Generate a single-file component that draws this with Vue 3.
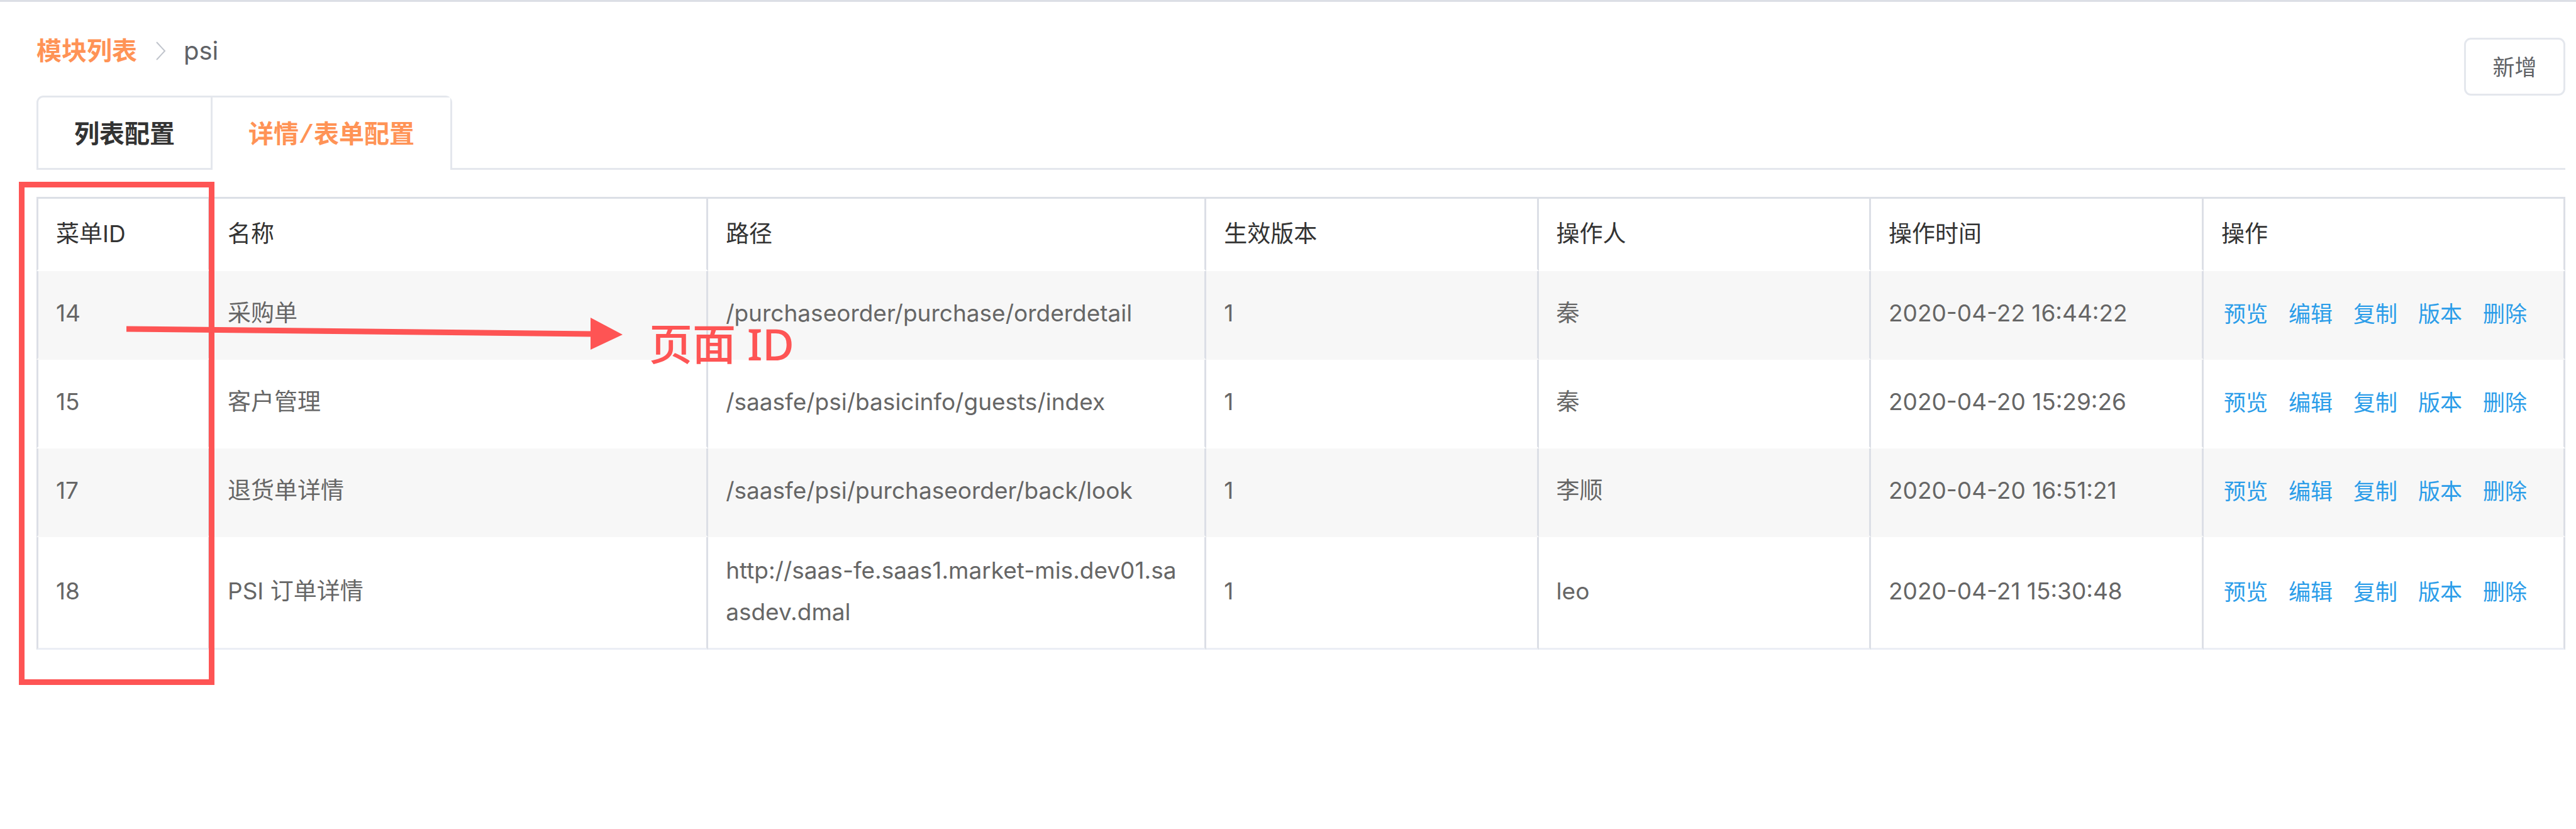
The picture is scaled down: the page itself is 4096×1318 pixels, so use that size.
<script setup>
const tabs = [
  { label: '列表配置', active: false },
  { label: '详情/表单配置', active: true },
]

const columns = ['菜单ID', '名称', '路径', '生效版本', '操作人', '操作时间', '操作']
const actions = ['预览', '编辑', '复制', '版本', '删除']

const rows = [
  { id: 14, name: '采购单', path: '/purchaseorder/purchase/orderdetail', version: 1, operator: '秦', time: '2020-04-22 16:44:22' },
  { id: 15, name: '客户管理', path: '/saasfe/psi/basicinfo/guests/index', version: 1, operator: '秦', time: '2020-04-20 15:29:26' },
  { id: 17, name: '退货单详情', path: '/saasfe/psi/purchaseorder/back/look', version: 1, operator: '李顺', time: '2020-04-20 16:51:21' },
  { id: 18, name: 'PSI 订单详情', path: 'http://saas-fe.saas1.market-mis.dev01.saasdev.dmal', version: 1, operator: 'leo', time: '2020-04-21 15:30:48' },
]
</script>

<template>
  <main class="page">
    <header class="head">
      <nav class="crumbs">
        <a href="#" class="crumb-link">模块列表</a>
        <svg class="chevron" viewBox="0 0 16 30" aria-hidden="true">
          <path d="M1 1 L14 15 L1 29" fill="none" stroke="#c0c4cc" stroke-width="2" />
        </svg>
        <span>psi</span>
      </nav>
      <button type="button" class="add">新增</button>
    </header>

    <div class="tabbar">
      <div class="tabs" role="tablist">
        <button
          v-for="tab in tabs"
          :key="tab.label"
          type="button"
          role="tab"
          class="tab"
          :class="{ active: tab.active }"
          :aria-selected="tab.active"
        >{{ tab.label }}</button>
      </div>
    </div>

    <section class="table-wrap">
      <table class="grid">
        <colgroup>
          <col class="c-id" />
          <col class="c-wide" />
          <col class="c-wide" />
          <col class="c-mid" />
          <col class="c-mid" />
          <col />
          <col class="c-ops" />
        </colgroup>
        <thead>
          <tr>
            <th v-for="c in columns" :key="c" scope="col">{{ c }}</th>
          </tr>
        </thead>
        <tbody>
          <tr v-for="row in rows" :key="row.id">
            <td>{{ row.id }}</td>
            <td>{{ row.name }}</td>
            <td>{{ row.path }}</td>
            <td>{{ row.version }}</td>
            <td>{{ row.operator }}</td>
            <td>{{ row.time }}</td>
            <td>
              <div class="ops">
                <a v-for="a in actions" :key="a" href="#">{{ a }}</a>
              </div>
            </td>
          </tr>
        </tbody>
      </table>

      <div class="mark-box"></div>
      <div class="mark-note">
        <svg class="arrow" viewBox="0 0 789 52" aria-hidden="true">
          <path d="M0 18 L740 26" stroke="#fe5454" stroke-width="9" />
          <path d="M738 0 L789 27 L738 51 Z" fill="#fe5454" />
        </svg>
        <span>页面 ID</span>
      </div>
    </section>
  </main>
</template>

<style>
body {
  margin: 0;
  background: #fff;
}
</style>

<style scoped>
.page {
  box-sizing: border-box;
  min-height: 100vh;
  padding: 57px 17px 0 58px;
  border-top: 3px solid #dcdfe6;
  font-family: Inter, "Noto Sans CJK SC", sans-serif;
  font-size: 37px;
  color: #666;
}

a {
  text-decoration: none;
}

.head {
  display: flex;
  align-items: flex-start;
  justify-content: space-between;
  height: 92px;
}

.crumbs {
  display: flex;
  align-items: center;
  font-size: 40px;
  line-height: 42px;
  color: #606266;
}

.crumb-link {
  color: #ff9356;
  font-weight: 700;
}

.chevron {
  width: 16px;
  height: 30px;
  margin: 0 28px 0 30px;
}

.add {
  width: 161px;
  height: 92px;
  padding: 0 0 3px;
  border: 3px solid #e4e7ed;
  border-radius: 11px;
  background: #fff;
  color: #606266;
  font-family: inherit;
  font-size: 35px;
}

.tabbar {
  display: flex;
  border-bottom: 3px solid #e4e7ed;
}

.tabs {
  display: flex;
  height: 115px;
  margin-bottom: -3px;
  border: 3px solid #e4e7ed;
  border-bottom: 0;
  border-radius: 11px 11px 0 0;
}

.tab {
  box-sizing: border-box;
  height: 112px;
  padding: 12px 57px 0;
  border: 0;
  background: none;
  color: #333;
  font-family: "Liberation Mono", "Noto Sans CJK SC", monospace;
  font-size: 40px;
  font-weight: 700;
  line-height: 60px;
}

.tab.active {
  height: 115px;
  padding-bottom: 3px;
  border-left: 3px solid #e4e7ed;
  background: #fff;
  color: #ff9356;
}

.table-wrap {
  position: relative;
  margin-top: 43px;
}

.grid {
  width: 100%;
  table-layout: fixed;
  border-collapse: separate;
  border-spacing: 0;
  border-top: 3px solid #dcdfe6;
}

.c-id {
  width: 276px;
}

.c-wide {
  width: 19.7%;
}

.c-mid {
  width: 13.14%;
}

.c-ops {
  width: 575px;
}

th,
td {
  box-sizing: border-box;
  padding: 22px 28px;
  border-right: 3px solid #dcdfe6;
  border-bottom: 3px solid transparent;
  line-height: 66px;
  text-align: left;
  vertical-align: middle;
  word-break: break-all;
}

th:first-child,
td:first-child {
  border-left: 3px solid #dcdfe6;
}

th {
  height: 115px;
  color: #333;
  font-weight: 400;
}

td {
  height: 141px;
  padding: 20px 28px 24px;
}

tbody tr:nth-child(odd) {
  background: #f7f7f7;
}

tbody tr:last-child td {
  border-bottom-color: #ebeef5;
}

.ops {
  display: flex;
  gap: 33px;
  padding: 2px 0 0 4px;
  font-size: 35px;
  white-space: nowrap;
}

.ops a {
  color: #2b9de9;
}

.mark-box {
  position: absolute;
  box-sizing: border-box;
  top: -24px;
  bottom: -56px;
  left: -28px;
  width: 311px;
  border: 9px solid #fe5454;
  pointer-events: none;
}

.mark-note {
  position: absolute;
  top: 192px;
  left: 143px;
  display: flex;
  gap: 42px;
  color: #fe5454;
  font-family: "Noto Sans", "Noto Sans CJK SC", sans-serif;
  font-size: 69px;
  font-weight: 500;
  line-height: 82px;
  white-space: nowrap;
  pointer-events: none;
}

.arrow {
  width: 789px;
  height: 52px;
}
</style>
